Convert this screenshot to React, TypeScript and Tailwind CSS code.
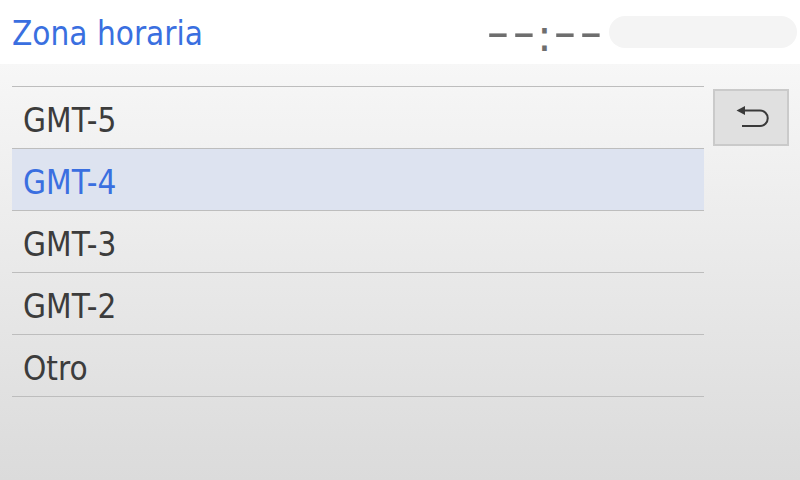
import { useState } from "react";

const zones = ["GMT-5", "GMT-4", "GMT-3", "GMT-2", "Otro"];

function BackIcon() {
  return (
    <svg width="40" height="30" viewBox="0 0 40 30" fill="none">
      <path d="M13 7.5 H29 A7.75 7.75 0 0 1 29 23 H11" stroke="#3a3a3a" strokeWidth="2" />
      <path d="M5.5 7.5 L14 3 L14 12 Z" fill="#3a3a3a" />
    </svg>
  );
}

function Clock({ text }: { text: string }) {
  return (
    <span className="flex items-center mt-2 text-[44px] leading-none text-[#6e6e6e] [font-family:'DejaVu_Sans',sans-serif]">
      {text.split("").map((c, i) =>
        c === ":" ? (
          <span key={i} className="w-[15px] text-center">
            {c}
          </span>
        ) : (
          <span key={i} className="w-[26px] text-center inline-block scale-x-[1.5] -translate-y-[4px]">
            {c}
          </span>
        )
      )}
    </span>
  );
}

export default function App() {
  const [selected, setSelected] = useState("GMT-4");

  return (
    <div
      className="w-[800px] h-[480px] flex flex-col overflow-hidden"
      style={{ fontFamily: "'DejaVu Sans Condensed', 'DejaVu Sans', sans-serif" }}
    >
      {/* header */}
      <div className="h-16 bg-white flex items-center justify-between pl-3 pr-[3px]">
        <h1 className="text-[33px] mt-[2px] text-[#3a6fe0] leading-none">Zona horaria</h1>
        <div className="flex items-center gap-[5px]">
          <Clock text="--:--" />
          <div className="w-[188px] h-8 rounded-2xl bg-[#f4f4f4]" />
        </div>
      </div>

      {/* body */}
      <div className="flex-1 flex bg-gradient-to-b from-[#f7f7f7] to-[#dbdbdb] pt-[22px] pl-3 pr-[11px] gap-[9px]">
        <ul className="w-[692px] border-t border-[#bdbdbd]">
          {zones.map((z) => (
            <li
              key={z}
              onClick={() => setSelected(z)}
              className={`h-[62px] border-b border-[#bdbdbd] flex items-center pl-[11px] pt-[7px] text-[33px] ${
                selected === z ? "bg-[#dde3f0] text-[#3a6fe0]" : "text-[#3c3c3c]"
              }`}
            >
              {z}
            </li>
          ))}
        </ul>
        <button className="mt-[3px] w-[76px] h-[57px] bg-[#e0e0e0] border-2 border-[#cacaca] flex items-center justify-center">
          <BackIcon />
        </button>
      </div>
    </div>
  );
}
